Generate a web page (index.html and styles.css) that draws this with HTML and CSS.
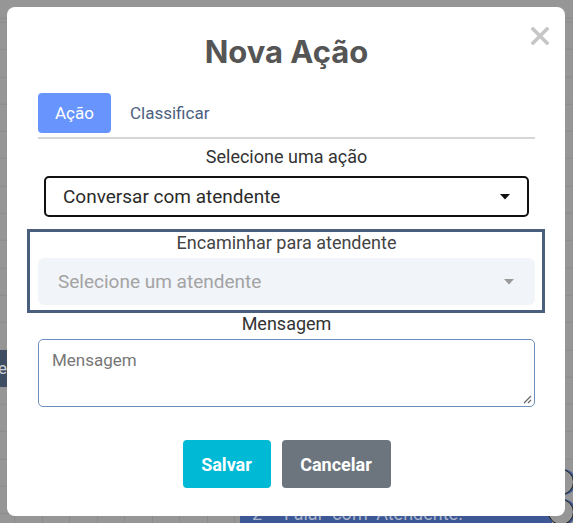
FILE: index.html
```html
<!DOCTYPE html>
<html lang="pt-BR">
<head>
<meta charset="utf-8">
<title>Nova Ação</title>
<link rel="stylesheet" href="styles.css">
</head>
<body>
<div class="underlay">
  <div class="side-item">e</div>
  <div class="bottom-bar">2 - Falar com Atendente.</div>
  <div class="node node-a"></div>
  <div class="node node-b"></div>
  <div class="grid-strip"></div>
</div>
<div class="modal">
  <button class="close" aria-label="Fechar">
    <svg width="18" height="18" viewBox="0 0 18 18"><path d="M2 2 L16 16 M16 2 L2 16" stroke="#c6c6c6" stroke-width="3.6" stroke-linecap="square" fill="none"/></svg>
  </button>
  <h2 class="title">Nova Ação</h2>
  <div class="tabs">
    <span class="tab tab-active">Ação</span>
    <span class="tab">Classificar</span>
  </div>
  <div class="field-label">Selecione uma ação</div>
  <div class="select select-main">
    <span>Conversar com atendente</span>
    <svg class="caret" width="10" height="6" viewBox="0 0 10 6"><path d="M0 0 H10 L5 5.5 Z" fill="#111"/></svg>
  </div>
  <div class="frame">
    <div class="field-label field-label-soft">Encaminhar para atendente</div>
    <div class="select select-disabled">
      <span>Selecione um atendente</span>
      <svg class="caret" width="10" height="6" viewBox="0 0 10 6"><path d="M0 0 H10 L5 5.5 Z" fill="#9a9a9a"/></svg>
    </div>
  </div>
  <div class="field-label">Mensagem</div>
  <div class="textarea">
    <span>Mensagem</span>
    <svg class="grip" width="10" height="10" viewBox="0 0 10 10"><path d="M9 2 L2 9 M9 6 L6 9" stroke="#666" stroke-width="1.2" fill="none"/></svg>
  </div>
  <div class="actions">
    <button class="btn btn-save">Salvar</button>
    <button class="btn btn-cancel">Cancelar</button>
  </div>
</div>
</body>
</html>
```
FILE: styles.css
```css
* { box-sizing: border-box; }

html, body {
  margin: 0;
  padding: 0;
}

body {
  width: 573px;
  height: 523px;
  overflow: hidden;
  position: relative;
  font-family: Roboto, "Liberation Sans", sans-serif;
  background-color: #969696;
  background-image: repeating-linear-gradient(to bottom, #8b8b8b 0, #8b8b8b 1px, transparent 1px, transparent 27.3px);
  background-position: 0 21.7px;
  padding-top: 7px;
}

.underlay {
  position: absolute;
  inset: 0;
  pointer-events: none;
}

.side-item {
  position: absolute;
  left: -30px;
  top: 350px;
  width: 38px;
  height: 37px;
  background: #3e4d62;
  color: #c9ced6;
  font-size: 17px;
  line-height: 37px;
  text-align: right;
  padding-right: 1px;
}

.bottom-bar {
  position: absolute;
  left: 240px;
  top: 500px;
  width: 312px;
  height: 30px;
  background: #3d5894;
  color: #a9b4cc;
  font-size: 18px;
  line-height: 28px;
  padding-left: 12px;
  word-spacing: 4px;
}

.node {
  position: absolute;
  width: 26px;
  height: 26px;
  border-radius: 50%;
  border: 1.5px solid #1d1d1d;
  background: #969696;
  box-shadow: 2px 0 0 #3d5894;
}

.node-a { left: 548px; top: 469px; }
.node-b { left: 548px; top: 499px; }

.grid-strip {
  position: absolute;
  left: 0;
  top: 516px;
  width: 240px;
  height: 7px;
  background-image: repeating-linear-gradient(to right, #8b8b8b 0, #8b8b8b 1px, transparent 1px, transparent 27.5px);
  background-position: 14px 0;
}

.modal {
  position: relative;
  margin-left: 7px;
  width: 558px;
  height: 509px;
  background: #fff;
  border-radius: 8px;
  padding: 27px 30px 0 31px;
}

.close {
  position: absolute;
  top: 20px;
  right: 16px;
  width: 18px;
  height: 18px;
  padding: 0;
  border: 0;
  background: none;
  display: block;
}

.close svg { display: block; }

.title {
  margin: 0;
  text-align: center;
  font-family: Inter, Roboto, sans-serif;
  font-size: 31px;
  line-height: 36px;
  font-weight: 700;
  color: #555;
}

.tabs {
  margin-top: 23px;
  display: flex;
  gap: 2px;
  padding-bottom: 4px;
  border-bottom: 2px solid #d6d6d6;
}

.tab {
  height: 40px;
  line-height: 40px;
  padding: 0 17px;
  font-size: 17px;
  color: #4c6180;
  border-radius: 4px;
}

.tab-active {
  background: #6794fd;
  color: #fff;
}

.field-label {
  text-align: center;
  font-size: 18px;
  line-height: 20px;
  color: #333;
  margin-top: 8px;
}

.field-label-soft {
  color: #444;
  margin-top: 1px;
}

.select {
  display: flex;
  align-items: center;
  justify-content: space-between;
  font-size: 19px;
}

.select-main {
  margin: 9px 6px 0 6px;
  height: 41px;
  border: 2px solid #111;
  border-radius: 5px;
  padding: 0 17px;
  color: #2b2b2b;
}

.frame {
  margin: 12px -10px 0 -11px;
  border: 3px solid #4a5f7d;
  padding: 0 7px 5px 8px;
}

.select-disabled {
  margin-top: 5px;
  height: 47px;
  background: #f1f4f9;
  border-radius: 6px;
  padding: 0 21px 0 20px;
  color: #a3a3a3;
}

.frame + .field-label {
  margin-top: 1px;
}

.textarea {
  position: relative;
  margin-top: 5px;
  height: 68px;
  border: 1px solid #6c8fc0;
  border-radius: 5px;
  padding: 9px 13px;
  font-size: 17px;
  line-height: 22px;
  color: #777;
}

.grip {
  position: absolute;
  right: 2px;
  bottom: 2px;
}

.actions {
  margin-top: 33px;
  display: flex;
  justify-content: center;
  gap: 11px;
}

.btn {
  height: 48px;
  border: 0;
  border-radius: 4px;
  color: #fff;
  font-family: Roboto, "Liberation Sans", sans-serif;
  font-size: 18px;
  font-weight: 700;
  padding: 0;
}

.btn-save {
  width: 88px;
  background: #00b9d5;
}

.btn-cancel {
  width: 109px;
  background: #6c757d;
}
```
